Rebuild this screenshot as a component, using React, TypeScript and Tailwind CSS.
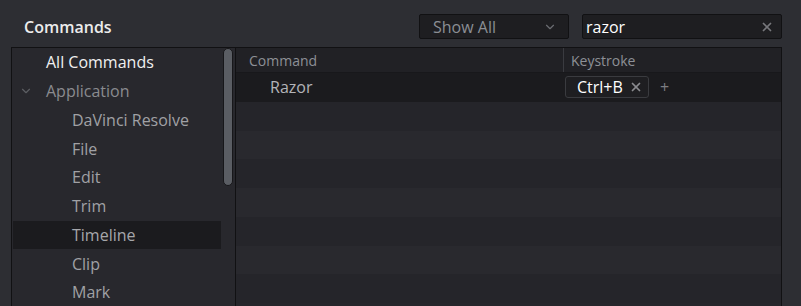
import { ChevronDown, X } from 'lucide-react';

const groups = ['DaVinci Resolve', 'File', 'Edit', 'Trim', 'Timeline', 'Clip', 'Mark'];

export default function App() {
  return (
    <div className="w-[801px] h-[306px] overflow-hidden bg-[#2d2e33] font-['Open_Sans',sans-serif]">
      {/* top bar */}
      <div className="flex items-center h-[47px] pt-[14px] pb-[8px] pr-[19px]">
        <div className="pl-6 mt-[1px] text-[16px] font-semibold text-[#ececec] leading-none">Commands</div>
        <div className="flex-1" />
        <div className="flex items-center w-[150px] h-[25px] bg-[#1e1e21] border border-[#111113] rounded-[2px] pl-[13px] pr-[11px]">
          <span className="flex-1 text-[16px] text-[#8b8e94] leading-none">Show All</span>
          <ChevronDown className="w-[14px] h-[14px] text-[#6b6d72]" strokeWidth={2} />
        </div>
        <div className="ml-[13px] flex items-center w-[200px] h-[25px] bg-[#1e1e21] border border-[#111113] rounded-[2px] pl-[3px] pr-[7px]">
          <span className="flex-1 text-[16px] text-white leading-none">razor</span>
          <X className="w-[14px] h-[14px] text-[#77787c]" strokeWidth={3} />
        </div>
      </div>

      {/* body */}
      <div className="flex ml-[11px] mr-[19px] h-[259px] border-t border-l border-r border-[#111113]">
        {/* category tree */}
        <div className="flex w-[223px] bg-[#28282d]">
          <div className="w-[209px] pl-[1px]">
            <div className="h-[28.75px] flex items-center pl-[33px] text-[16px] text-[#f0f0f0]">All Commands</div>
            <div className="h-[28.75px] flex items-center text-[16px] text-[#8a8b8f]">
              <ChevronDown className="ml-[6px] w-[14px] h-[14px] text-[#5c5e63]" strokeWidth={2} />
              <span className="ml-[13px]">Application</span>
            </div>
            {groups.map((g) => (
              <div
                key={g}
                className={
                  g === 'Timeline'
                    ? 'h-[28.75px] flex items-center pl-[59px] text-[16px] text-[#a6a7ab] bg-[#1b1b1e]'
                    : 'h-[28.75px] flex items-center pl-[59px] text-[16px] text-[#a0a1a5]'
                }
              >
                {g}
              </div>
            ))}
          </div>
          <div className="flex-1 pl-[2px]">
            <div className="w-[10px] h-[138px] bg-[#5a5d63] border border-[#17171a] rounded-[5px]" />
          </div>
        </div>
        <div className="w-px bg-[#111113]" />

        {/* command table */}
        <div className="flex-1 bg-[#26262b]">
          <div className="flex h-[25px] bg-[#212125] border-b border-[#18181b] text-[14px] text-[#8d9096]">
            <div className="w-[327px] flex items-center pl-[13px]">Command</div>
            <div className="w-px bg-[#3a3b40]" />
            <div className="flex items-center pl-[7px]">Keystroke</div>
          </div>
          <div className="flex h-[28.75px] bg-[#1b1b1e]">
            <div className="w-[328px] flex items-center pl-[34px] text-[16px] text-[#b3b4b8]">Razor</div>
            <div className="flex items-center pl-[1px]">
              <div className="flex items-center h-[22px] w-[84px] pl-[11px] pr-[5px] bg-[#1e1e21] border border-[#3a3b3f] rounded-[3px]">
                <span className="flex-1 text-[16px] text-white leading-none">Ctrl+B</span>
                <X className="w-[14px] h-[14px] text-[#8a8b8f]" strokeWidth={3} />
              </div>
              <span className="ml-[11px] text-[16px] text-[#7d7e82] leading-none">+</span>
            </div>
          </div>
          {[0, 1, 2, 3, 4, 5, 6].map((i) => (
            <div key={i} className={i % 2 === 0 ? 'h-[28.75px] bg-[#25252a]' : 'h-[28.75px] bg-[#29292e]'} />
          ))}
        </div>
      </div>
    </div>
  );
}
